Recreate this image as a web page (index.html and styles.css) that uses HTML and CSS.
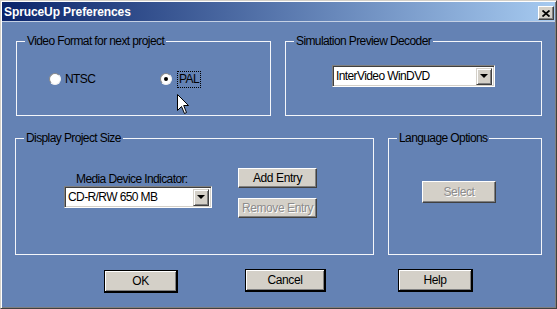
FILE: index.html
```html
<!DOCTYPE html>
<html>
<head>
	<title>SpruceUp Preferences</title>
	<link rel="stylesheet" href="styles.css">
</head>
<body>
<div class="window">
	<div class="titlebar">
		<span class="title">SpruceUp Preferences</span>
		<span class="close">
			<svg width="8" height="7" viewBox="0 0 8 7"><path d="M0.5 0.5 L7.5 6.5 M7.5 0.5 L0.5 6.5" stroke="#000" stroke-width="1.8" fill="none"/></svg>
		</span>
	</div>
	<div class="content">
		<div class="row row-top">
			<fieldset class="group g-video">
				<legend>Video Format for next project</legend>
				<div class="radios">
					<label class="radio r-ntsc"><span class="dot"></span>NTSC</label>
					<label class="radio on"><span class="dot"></span><span class="focus">PAL</span></label>
				</div>
			</fieldset>
			<fieldset class="group g-decoder">
				<legend>Simulation Preview Decoder</legend>
				<div class="combo c-decoder">
					<span class="combo-text">InterVideo WinDVD</span>
					<span class="drop"><i></i></span>
				</div>
			</fieldset>
		</div>
		<div class="row row-mid">
			<fieldset class="group g-size">
				<legend>Display Project Size</legend>
				<div class="size-body">
					<div class="media-col">
						<div class="media-label">Media Device Indicator:</div>
						<div class="combo c-media">
							<span class="combo-text">CD-R/RW 650 MB</span>
							<span class="drop"><i></i></span>
						</div>
					</div>
					<div class="btn-col">
						<button class="btn b-entry">Add Entry</button>
						<button class="btn b-entry" disabled>Remove Entry</button>
					</div>
				</div>
			</fieldset>
			<fieldset class="group g-lang">
				<legend>Language Options</legend>
				<button class="btn b-select" disabled>Select</button>
			</fieldset>
		</div>
		<div class="actions">
			<button class="btn btn-main b-ok">OK</button>
			<button class="btn btn-main b-cancel">Cancel</button>
			<button class="btn btn-main b-help">Help</button>
		</div>
	</div>
	<svg class="pointer" width="13" height="21" viewBox="0 0 13 21"><path d="M0.5 0.5 L0.5 16.5 L4.5 12.5 L7.5 19.5 L9.5 18.5 L6.7 11.5 L11.5 11.5 Z" fill="#fff" stroke="#000" stroke-width="1"/></svg>
</div>
</body>
</html>
```

FILE: styles.css
```css
body{
	margin: 0;
	font-family: "Liberation Sans", Arial, sans-serif;
	font-size: 12px;
}
.window{
	position: relative;
	width: 557px;
	height: 309px;
	box-sizing: border-box;
	padding: 1px;
	background-color: #6482b4;
	border: 1px solid;
	border-color: #d4d0c8 #404040 #404040 #d4d0c8;
	box-shadow: inset 1px 1px #fff, inset -1px -1px #808080;
	overflow: hidden;
}
.titlebar{
	height: 19px;
	display: flex;
	align-items: center;
	justify-content: space-between;
	background: linear-gradient(to right, #0a246a, #a6caf0);
	border-bottom: 1px solid #c4d0e4;
}
.title{
	padding-left: 2px;
	color: #fff;
	font-weight: bold;
	font-size: 12px;
	letter-spacing: -0.1px;
}
.close{
	width: 16px;
	height: 14px;
	margin-right: 1px;
	margin-top: 3px;
	box-sizing: border-box;
	display: flex;
	align-items: center;
	justify-content: center;
	background-color: #d4d0c8;
	border: 1px solid;
	border-color: #fff #404040 #404040 #fff;
	box-shadow: inset -1px -1px #808080;
}
.content{
	padding: 12px 0 0 13px;
}
.row{
	display: flex;
	gap: 14px;
}
.row-mid{
	margin-top: 15px;
}
.group{
	margin: 0;
	padding: 0;
	min-width: 0;
	box-sizing: border-box;
	border: 1px solid #f4f6fa;
	color: #000;
}
.group legend{
	margin-left: 8px;
	padding: 0 2px;
	line-height: 14px;
	letter-spacing: -0.6px;
}
.g-video{
	margin-left: 1px;
	width: 255px;
	height: 82px;
}
.g-decoder{
	width: 257px;
	height: 82px;
}
.g-size{
	width: 359px;
	height: 124px;
}
.g-lang{
	width: 154px;
	height: 124px;
}
.radios{
	display: flex;
	align-items: center;
	margin-top: 25px;
	padding-left: 32px;
	height: 12px;
	letter-spacing: -0.6px;
}
.radio{
	display: flex;
	align-items: center;
	gap: 4px;
}
.r-ntsc{
	width: 111px;
}
.dot{
	width: 12px;
	height: 12px;
	box-sizing: border-box;
	border-radius: 50%;
	background-color: #fff;
	border: 1px solid;
	border-color: #8a8a8a #f0f0f0 #f0f0f0 #8a8a8a;
	display: flex;
	align-items: center;
	justify-content: center;
}
.on .dot::after{
	content: "";
	width: 4px;
	height: 4px;
	border-radius: 50%;
	background-color: #000;
}
.focus{
	margin-left: 1px;
	padding: 1px 1px;
	line-height: 13px;
	border: 1px dotted #000;
}
.combo{
	position: relative;
	height: 22px;
	box-sizing: border-box;
	background-color: #fff;
	border: 1px solid;
	border-color: #808080 #fff #fff #808080;
	box-shadow: inset 1px 1px #404040, inset -1px -1px #d4d0c8;
	display: flex;
	align-items: center;
	justify-content: space-between;
	padding: 2px 2px 2px 3px;
	letter-spacing: -0.6px;
}
.c-decoder{
	width: 163px;
	margin: 17px 0 0 46px;
}
.c-media{
	width: 148px;
}
.drop{
	width: 16px;
	height: 17px;
	box-sizing: border-box;
	background-color: #d4d0c8;
	border: 1px solid;
	border-color: #d4d0c8 #404040 #404040 #d4d0c8;
	box-shadow: inset 1px 1px #fff, inset -1px -1px #808080;
	display: flex;
	align-items: center;
	justify-content: center;
}
.drop i{
	width: 0;
	height: 0;
	border-left: 4px solid transparent;
	border-right: 4px solid transparent;
	border-top: 4px solid #000;
}
.size-body{
	display: flex;
	padding-left: 48px;
	gap: 26px;
}
.media-col{
	margin-top: 28px;
}
.media-label{
	padding-left: 12px;
	line-height: 13px;
	letter-spacing: -0.6px;
}
.btn-col{
	margin-top: 23px;
	display: flex;
	flex-direction: column;
	gap: 10px;
}
.btn{
	margin: 0;
	padding: 0;
	box-sizing: border-box;
	background-color: #d4d0c8;
	font-family: "Liberation Sans", Arial, sans-serif;
	font-size: 12px;
	letter-spacing: -0.4px;
	color: #000;
	border: 1px solid;
	border-color: #fff #404040 #404040 #fff;
	box-shadow: inset -1px -1px #808080;
}
.btn:disabled{
	color: #8c8c8c;
	text-shadow: 1px 1px 0 #fff;
}
.b-entry{
	width: 79px;
	height: 20px;
}
.b-select{
	width: 74px;
	height: 22px;
	margin: 36px 0 0 33px;
}
.actions{
	display: flex;
	margin-top: 14px;
	padding-left: 89px;
}
.btn-main{
	height: 23px;
	border: 1px solid #000;
	border-right-width: 2px;
	border-bottom-width: 2px;
	box-shadow: inset 1px 1px #fff, inset -1px -1px #808080;
}
.b-ok{
	width: 74px;
	margin-top: 1px;
}
.b-cancel{
	width: 81px;
	margin-left: 67px;
}
.b-help{
	width: 75px;
	margin-left: 72px;
}
.pointer{
	position: absolute;
	left: 176px;
	top: 93px;
}
```
